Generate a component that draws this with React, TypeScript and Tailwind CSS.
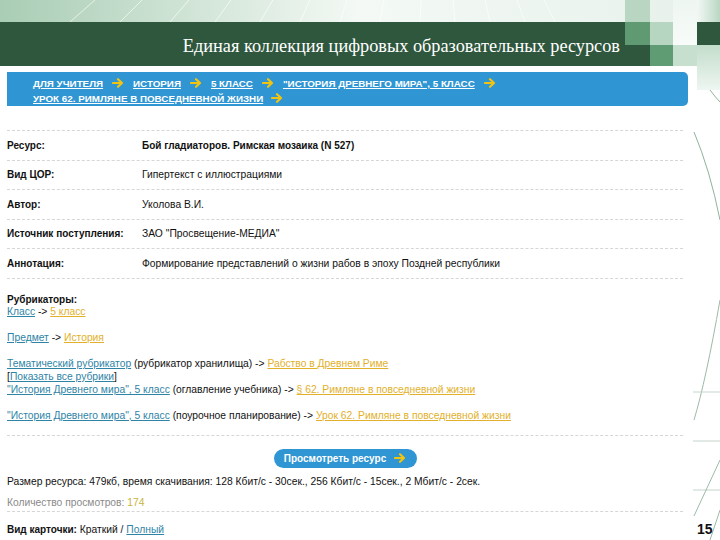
import React from 'react';

const Arrow = ({ className = '' }: { className?: string }) => (
  <svg viewBox="0 0 12 10" className={`w-[12px] h-[10px] ${className}`}>
    <path d="M1 5 H10 M6 1.2 L10 5 L6 8.8" fill="none" stroke="#f2c40f" strokeWidth="2.2" strokeLinecap="round" strokeLinejoin="round" />
  </svg>
);

const crumbs1 = ['ДЛЯ УЧИТЕЛЯ', 'ИСТОРИЯ', '5 КЛАСС', '"ИСТОРИЯ ДРЕВНЕГО МИРА", 5 КЛАСС'];

const rows: [string, string, boolean][] = [
  ['Ресурс:', 'Бой гладиаторов. Римская мозаика (N 527)', true],
  ['Вид ЦОР:', 'Гипертекст с иллюстрациями', false],
  ['Автор:', 'Уколова В.И.', false],
  ['Источник поступления:', 'ЗАО "Просвещение-МЕДИА"', false],
  ['Аннотация:', 'Формирование представлений о жизни рабов в эпоху Поздней республики', false],
];

const Blue = ({ children }: { children: React.ReactNode }) => (
  <span className="text-[#2f84a6] underline">{children}</span>
);
const Gold = ({ children }: { children: React.ReactNode }) => (
  <span className="text-[#e2b02a] underline">{children}</span>
);

export default function App() {
  return (
    <div className="relative w-[720px] h-[540px] overflow-hidden bg-white font-['Liberation_Sans',Arial,sans-serif] text-[#111]">
      {/* header */}
      <div className="relative h-[66px]">
        <div className="h-[22px] bg-gradient-to-r from-[#a9cdb5] via-[#f4f9f5] to-[#e6f1ea]" />
        <svg className="absolute left-0 top-0 w-[720px] h-[22px]" viewBox="0 0 720 22">
          {[70, 120, 170, 215, 260, 300, 340, 380, 420, 455, 490, 525, 555].map((x, i) => (
            <line key={i} x1={x} y1="22" x2={x + 25 - i * 3} y2="0" stroke="#ffffff" strokeOpacity="0.8" strokeWidth="0.8" />
          ))}
        </svg>
        <div className="h-[44px] w-[672px] bg-[#2e573d] flex items-center justify-end pr-[52px]">
          <span className="text-white text-[18.3px] font-['Liberation_Serif','Times_New_Roman',serif] pt-[6px]">
            Единая коллекция цифровых образовательных ресурсов
          </span>
        </div>
        {/* decorative squares */}
        <div className="absolute left-[625px] top-0 w-[25px] h-[22px] bg-[#b8d6c2]" />
        <div className="absolute left-[625px] top-[22px] w-[25px] h-[23px] bg-[#5f9a73]" />
        <div className="absolute left-[650px] top-[22px] w-[23px] h-[23px] bg-[#b7d6c1]" />
        <div className="absolute left-[650px] top-[45px] w-[23px] h-[21px] bg-[#5f9b73]" />
        <div className="absolute left-[673px] top-0 w-[24px] h-[45px] bg-gradient-to-b from-[#eef6f1] to-[#f8fbf9]" />
        <div className="absolute left-[673px] top-[45px] w-[24px] h-[21px] bg-[#c6dfcf]" />
        <div className="absolute left-[697px] top-0 w-[23px] h-[22px] bg-gradient-to-r from-[#f3f8f5] to-[#b9d7c3]" />
        <div className="absolute left-[697px] top-[22px] w-[23px] h-[23px] bg-[#2e573d]" />
        <div className="absolute left-[697px] top-[45px] w-[23px] h-[45px] bg-gradient-to-b from-[#c3ddcb] to-[#eef6f1]" />
      </div>

      {/* right decoration */}
      <svg className="absolute left-[688px] top-[90px] w-[32px] h-[450px]" viewBox="0 0 32 450">
        <path d="M6 42 Q22 80 32 130" fill="none" stroke="#8fb39c" strokeWidth="1" />
        <path d="M22 0 Q28 8 32 12" fill="none" stroke="#8fb39c" strokeWidth="1" />
        <path d="M32 210 Q18 290 6 330" fill="none" stroke="#9bbba7" strokeWidth="1" />
        <line x1="5" y1="302" x2="32" y2="302" stroke="#c6d5cb" strokeWidth="1" />
        <line x1="5" y1="351" x2="32" y2="351" stroke="#c6d5cb" strokeWidth="1" />
        <line x1="5" y1="400" x2="32" y2="400" stroke="#c6d5cb" strokeWidth="1" />
        <line x1="32" y1="370" x2="6" y2="426" stroke="#9bbba7" strokeWidth="1" />
        <line x1="32" y1="420" x2="22" y2="450" stroke="#9bbba7" strokeWidth="1" />
      </svg>

      {/* content */}
      <div className="pl-[7px] w-[688px]">
        <div className="mt-[6px] h-[34px] rounded-r-[5px] bg-[#2f95d3] pl-[26px] pt-[3.5px] text-white text-[9.8px] font-bold leading-[15px]">
          <div className="flex items-center">
            {crumbs1.map((c, i) => (
              <React.Fragment key={i}>
                <span className="underline">{c}</span>
                <Arrow className="mx-[9px]" />
              </React.Fragment>
            ))}
          </div>
          <div className="flex items-center">
            <span className="underline">УРОК 62. РИМЛЯНЕ В ПОВСЕДНЕВНОЙ ЖИЗНИ</span>
            <Arrow className="ml-[8px]" />
          </div>
        </div>

        <div className="mt-[24px] w-[676px] border-t border-dashed border-[#d6d6d6] text-[10.3px]">
          {rows.map(([k, v, b], i) => (
            <div key={i} className="flex items-center h-[29.5px] border-b border-dashed border-[#d6d6d6]">
              <span className="w-[135px] font-bold text-[10px]">{k}</span>
              <span className={b ? 'font-bold text-[10px]' : ''}>{v}</span>
            </div>
          ))}
        </div>

        <div className="mt-[15px] text-[10.3px] leading-[12.9px] w-[676px]">
          <div className="font-bold text-[10px]">Рубрикаторы:</div>
          <div><Blue>Класс</Blue> -&gt; <Gold>5 класс</Gold></div>
          <div>&nbsp;</div>
          <div><Blue>Предмет</Blue> -&gt; <Gold>История</Gold></div>
          <div>&nbsp;</div>
          <div><Blue>Тематический рубрикатор</Blue> (рубрикатор хранилища) -&gt; <Gold>Рабство в Древнем Риме</Gold></div>
          <div>[<Blue>Показать все рубрики</Blue>]</div>
          <div><Blue>"История Древнего мира", 5 класс</Blue> (оглавление учебника) -&gt; <Gold>§ 62. Римляне в повседневной жизни</Gold></div>
          <div>&nbsp;</div>
          <div><Blue>"История Древнего мира", 5 класс</Blue> (поурочное планирование) -&gt; <Gold>Урок 62. Римляне в повседневной жизни</Gold></div>
        </div>

        <div className="mt-[12px] w-[676px] border-t border-dashed border-[#d6d6d6]" />

        <div className="w-[676px] flex justify-center mt-[13px]">
          <div className="h-[19px] w-[143px] rounded-full bg-[#2f95d3] flex items-center justify-center gap-[8px] text-white text-[10px] font-bold">
            <span>Просмотреть ресурс</span>
            <Arrow />
          </div>
        </div>

        <div className="mt-[8px] text-[10.3px] leading-[12px]">
          Размер ресурса: 479кб, время скачивания: 128 Кбит/с - 30сек., 256 Кбит/с - 15сек., 2 Мбит/с - 2сек.
        </div>
        <div className="mt-[9px] text-[10.3px] leading-[12px] text-[#8a8a8a]">
          Количество просмотров: <span className="text-[#c9b43a]">174</span>
        </div>
        <div className="mt-[2px] w-[676px] border-t border-dashed border-[#d6d6d6]" />
        <div className="mt-[12px] text-[10.3px] leading-[12px]">
          <span className="font-bold text-[10px]">Вид карточки:</span> Краткий / <Blue>Полный</Blue>
        </div>
      </div>

      <div className="absolute left-[697px] top-[521px] text-[14px] font-bold leading-[16px]">15</div>
    </div>
  );
}
